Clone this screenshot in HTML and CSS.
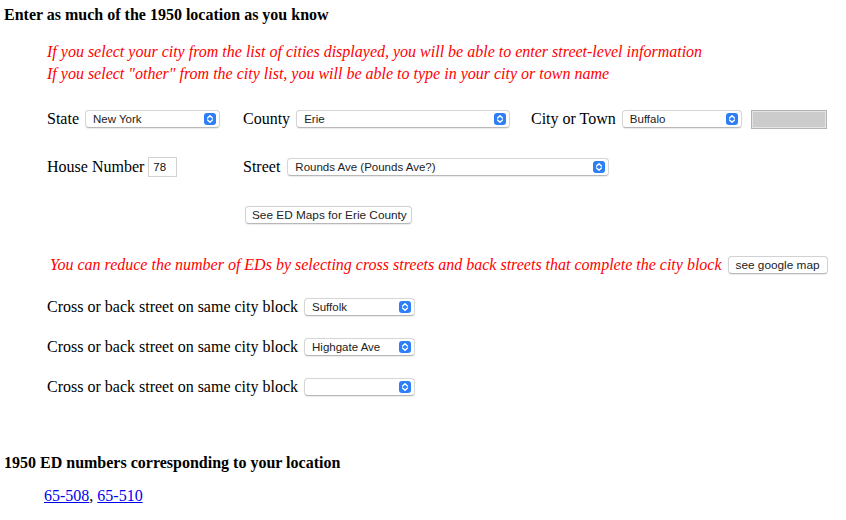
FILE: index.html
```html
<!DOCTYPE html>
<html lang="en">
<head>
<meta charset="utf-8">
<title>1950 ED Finder</title>
<link rel="stylesheet" href="styles.css">
</head>
<body>
<h3 class="title">Enter as much of the 1950 location as you know</h3>
<div class="notes">
  <div>If you select your city from the list of cities displayed, you will be able to enter street-level information</div>
  <div>If you select "other" from the city list, you will be able to type in your city or town name</div>
</div>

<div class="row r1">
  <div class="cell c1">
    <span class="lbl">State</span>
    <span class="sel w-state"><span class="val">New York</span><svg class="arr" viewBox="0 0 12 12"><rect width="12" height="12" rx="3"/><path d="M3.6 5 6 2.7 8.4 5M3.6 7 6 9.3 8.4 7"/></svg></span>
  </div>
  <div class="cell c2">
    <span class="lbl">County</span>
    <span class="sel w-county"><span class="val">Erie</span><svg class="arr" viewBox="0 0 12 12"><rect width="12" height="12" rx="3"/><path d="M3.6 5 6 2.7 8.4 5M3.6 7 6 9.3 8.4 7"/></svg></span>
  </div>
  <div class="cell c3">
    <span class="lbl">City or Town</span>
    <span class="sel w-city"><span class="val">Buffalo</span><svg class="arr" viewBox="0 0 12 12"><rect width="12" height="12" rx="3"/><path d="M3.6 5 6 2.7 8.4 5M3.6 7 6 9.3 8.4 7"/></svg></span>
    <span class="disabled-box"></span>
  </div>
</div>

<div class="row r2">
  <div class="cell c1">
    <span class="lbl">House Number</span>
    <span class="num">78</span>
  </div>
  <div class="cell c2">
    <span class="lbl">Street</span>
    <span class="sel w-street"><span class="val">Rounds Ave (Pounds Ave?)</span><svg class="arr" viewBox="0 0 12 12"><rect width="12" height="12" rx="3"/><path d="M3.6 5 6 2.7 8.4 5M3.6 7 6 9.3 8.4 7"/></svg></span>
  </div>
</div>

<div class="row r3">
  <div class="cell c1"></div>
  <div class="cell c2">
    <button class="btn btn-maps" type="button">See ED Maps for Erie County</button>
  </div>
</div>

<div class="row r4">
  <span class="redtext">You can reduce the number of EDs by selecting cross streets and back streets that complete the city block</span>
  <button class="btn btn-google" type="button">see google map</button>
</div>

<div class="cross">
  <div class="row xrow">
    <span class="lbl">Cross or back street on same city block</span>
    <span class="sel w-cross"><span class="val">Suffolk</span><svg class="arr" viewBox="0 0 12 12"><rect width="12" height="12" rx="3"/><path d="M3.6 5 6 2.7 8.4 5M3.6 7 6 9.3 8.4 7"/></svg></span>
  </div>
  <div class="row xrow">
    <span class="lbl">Cross or back street on same city block</span>
    <span class="sel w-cross"><span class="val">Highgate Ave</span><svg class="arr" viewBox="0 0 12 12"><rect width="12" height="12" rx="3"/><path d="M3.6 5 6 2.7 8.4 5M3.6 7 6 9.3 8.4 7"/></svg></span>
  </div>
  <div class="row xrow">
    <span class="lbl">Cross or back street on same city block</span>
    <span class="sel w-cross"><span class="val"></span><svg class="arr" viewBox="0 0 12 12"><rect width="12" height="12" rx="3"/><path d="M3.6 5 6 2.7 8.4 5M3.6 7 6 9.3 8.4 7"/></svg></span>
  </div>
</div>

<h3 class="title title2">1950 ED numbers corresponding to your location</h3>
<div class="links"><a href="#">65-508</a>, <a href="#">65-510</a></div>
</body>
</html>
```

FILE: styles.css
```css
html, body {
  margin: 0;
  padding: 0;
  background: #ffffff;
}
body {
  font-family: "Liberation Serif", "Times New Roman", serif;
  font-size: 16px;
  color: #000;
  padding: 0 4px;
}
.title {
  margin: 6px 0 0 0;
  font-size: 16px;
  line-height: 18px;
  font-weight: bold;
}
.notes {
  margin: 17px 0 0 43px;
  color: #ff0000;
  font-style: italic;
  line-height: 22px;
}
.row {
  display: flex;
  align-items: center;
  height: 20px;
}
.r1 { margin-top: 24px; margin-left: 43px; }
.r2 { margin-top: 28px; margin-left: 43px; }
.r3 { margin-top: 28px; margin-left: 43px; }
.r4 { margin-top: 30px; margin-left: 46px; }
.cell {
  display: flex;
  align-items: center;
  gap: 6px;
}
.c1 { width: 196px; flex: none; }
.c2 { width: 288px; flex: none; }
.r2 .c2 { width: auto; }
.r2 .c1 { gap: 4px; }
.lbl {
  white-space: nowrap;
}
.sel {
  display: inline-flex;
  align-items: center;
  justify-content: space-between;
  box-sizing: border-box;
  height: 18px;
  padding: 0 3px 0 7px;
  background: #fff;
  border: 1px solid #d6d6d6;
  border-bottom-color: #b8b8b8;
  border-radius: 4px;
  box-shadow: 0 0.5px 1px rgba(0, 0, 0, 0.08);
  font-family: "Liberation Sans", Arial, sans-serif;
  font-size: 11.5px;
  color: #222;
  flex: none;
}
.val { white-space: nowrap; }
.arr {
  width: 12px;
  height: 12px;
  flex: none;
}
.arr rect { fill: #2d7ef7; }
.arr path {
  fill: none;
  stroke: #ffffff;
  stroke-width: 1.4;
  stroke-linecap: round;
  stroke-linejoin: round;
}
.w-state { width: 135px; }
.w-county { width: 214px; }
.w-city { width: 120px; }
.w-street { width: 322px; margin-left: 1px; }
.w-cross { width: 111px; }
.disabled-box {
  display: inline-block;
  box-sizing: border-box;
  width: 76px;
  height: 19px;
  margin-left: 3px;
  background: #cccccc;
  border: 1px solid #b4b4b4;
  box-shadow: inset 0 0 0 1px #e4e4e4;
  flex: none;
}
.num {
  display: inline-flex;
  align-items: center;
  box-sizing: border-box;
  width: 29px;
  height: 20px;
  padding-left: 4px;
  border: 1px solid #d2d2d2;
  background: #fff;
  font-family: "Liberation Sans", Arial, sans-serif;
  font-size: 11.5px;
  color: #111;
}
.btn {
  box-sizing: border-box;
  height: 18px;
  padding: 0 6px;
  background: #fff;
  border: 1px solid #d2d2d2;
  border-bottom-color: #b8b8b8;
  border-radius: 4px;
  box-shadow: 0 0.5px 1px rgba(0, 0, 0, 0.08);
  font-family: "Liberation Sans", Arial, sans-serif;
  font-size: 11.8px;
  color: #222;
  line-height: 16px;
  white-space: nowrap;
}
.btn-maps { margin-left: 2px; width: 167px; }
.btn-google { margin-left: 6px; width: 100px; }
.redtext {
  color: #ff0000;
  font-style: italic;
  white-space: nowrap;
}
.cross { margin-top: 22px; margin-left: 43px; }
.xrow { gap: 6px; }
.xrow + .xrow { margin-top: 20px; }
.title2 { margin-top: 57px; }
.links {
  margin: 15px 0 0 40px;
  line-height: 18px;
}
.links a { color: #0000ee; }
```
